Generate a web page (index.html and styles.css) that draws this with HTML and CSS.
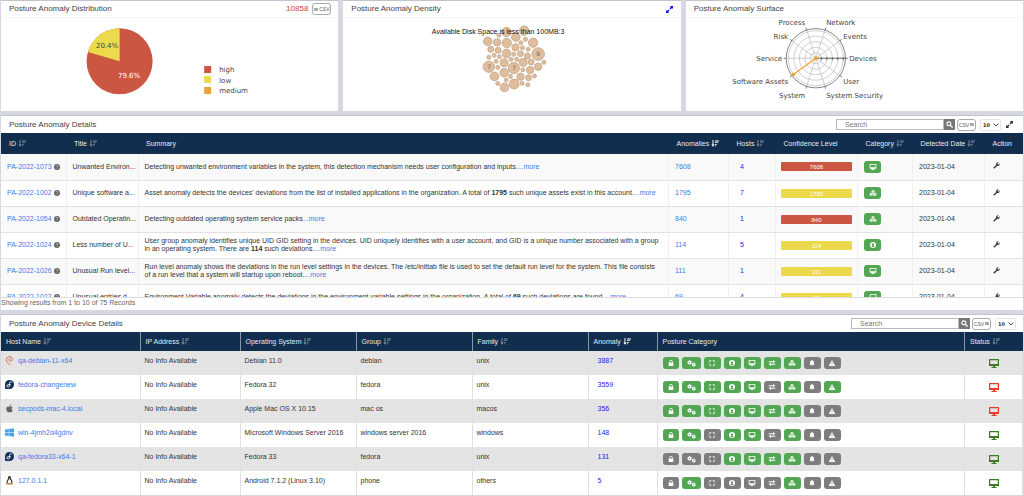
FILE: index.html
```html
<!DOCTYPE html>
<html lang="en">
<head>
<meta charset="utf-8">
<title>Posture Anomaly</title>
<link rel="stylesheet" href="styles.css">
</head>
<body>
<svg class="sprite" aria-hidden="true">
  <symbol id="sort" viewBox="0 0 16 14"><path d="M3 0h2v9h2.500L4 13.500.5 9H3zM8 1h8v2H8zM8 4.500h6v1.600H8zM8 8h4v1.600H8zM8 11h2v1.600H8z"/></symbol>
  <symbol id="help" viewBox="0 0 16 16"><circle cx="8" cy="8" r="8"/><path d="M5.500 6a2.500 2.500 0 1 1 3.500 2.300q-1 .5-1 1.500M8 11v2" fill="none" stroke="#ddd" stroke-width="1.500"/></symbol>
  <symbol id="search" viewBox="0 0 16 16"><circle cx="6.500" cy="6.500" r="4.500" fill="none" stroke="currentColor" stroke-width="2.500"/><path d="M10 10l5 5" stroke="currentColor" stroke-width="3"/></symbol>
  <symbol id="list" viewBox="0 0 10 10"><path d="M0 1h10v1.500H0zM0 4.200h10v1.500H0zM0 7.500h10V9H0z"/></symbol>
  <symbol id="chevron" viewBox="0 0 12 8"><path d="M1 1l5 5 5-5" fill="none" stroke="currentColor" stroke-width="1.800"/></symbol>
  <symbol id="expand" viewBox="0 0 16 16"><path d="M9 0h7v7l-2.200-2.200-3.300 3.300-2.600-2.600 3.300-3.300zM7 16H0V9l2.200 2.200 3.300-3.300 2.600 2.600-3.300 3.300z"/></symbol>
  <symbol id="wrench" viewBox="0 0 24 24"><path transform="translate(24) scale(-1 1)" d="M22.700 19l-9.100-9.100c.9-2.300.4-5-1.500-6.900-2-2-5-2.400-7.400-1.300L9 6 6 9 1.600 4.700C.4 7.100.9 10.100 2.900 12.100c1.900 1.900 4.600 2.400 6.900 1.500l9.100 9.100c.4.4 1 .4 1.400 0l2.300-2.300c.5-.4.5-1.100.1-1.400z"/></symbol>
  <symbol id="monitor" viewBox="0 0 20 18"><path fill-rule="evenodd" d="M1 0h18a1 1 0 0 1 1 1v12a1 1 0 0 1-1 1h-7v2h3v2H5v-2h3v-2H1a1 1 0 0 1-1-1V1a1 1 0 0 1 1-1zM2.500 2.500v7.500h15V2.500z"/></symbol>
  <symbol id="cubes" viewBox="0 0 20 18"><path d="M10 0l4.500 2v5L10 9 5.500 7V2zM4.800 8l4.500 2v5.500L4.800 18 0 15.500V10zM15.200 8L20 10v5.500L15.200 18l-4.500-2.500V10z"/><path d="M6 2.500l4 1.700 4-1.700M10 4.200V9M.5 10.500l4.300 1.800 4.300-1.800M4.800 12.300V18M11 10.500l4.200 1.800 4.300-1.800M15.200 12.300V18" fill="none" stroke="#53a653" stroke-width=".9"/></symbol>
  <symbol id="user" viewBox="0 0 18 18"><path fill-rule="evenodd" d="M9 0a9 9 0 1 1 0 18A9 9 0 0 1 9 0zm0 3.500a3.300 3.300 0 0 0-2 5.900v1.600l-3 1.800a6.500 6.500 0 0 0 10 0L11 11V9.400a3.300 3.300 0 0 0-2-5.900z"/></symbol>
  <symbol id="lock" viewBox="0 0 16 18"><path fill-rule="evenodd" d="M1 8h2V5a5 5 0 0 1 10 0v3h2v10H1zm4.500 0h5V5a2.500 2.500 0 0 0-5 0z"/></symbol>
  <symbol id="gears" viewBox="0 0 24 18"><circle cx="7" cy="6" r="3.400" fill="none" stroke="currentColor" stroke-width="3.400"/><circle cx="7" cy="6" r="5.200" fill="none" stroke="currentColor" stroke-width="2" stroke-dasharray="2.300 1.780"/><circle cx="18" cy="12" r="3" fill="none" stroke="currentColor" stroke-width="3"/><circle cx="18" cy="12" r="4.700" fill="none" stroke="currentColor" stroke-width="2" stroke-dasharray="1.900 1.800"/></symbol>
  <symbol id="frame" viewBox="0 0 18 18"><path d="M2 6V2h4M8 2h2M12 2h4v4M16 8v2M16 12v4h-4M10 16H8M6 16H2v-4M2 10V8" fill="none" stroke="currentColor" stroke-width="2.400"/></symbol>
  <symbol id="swap" viewBox="0 0 20 18"><path d="M0 4h13V0l7 5.200-7 4.300V6.500H0zM20 11.500H7V8.500L0 13l7 5v-4h13z"/></symbol>
  <symbol id="bell" viewBox="0 0 18 18"><path d="M8 0h2v1.500c3 .5 4.500 2.500 4.500 5.500 0 4 1 5.500 2.500 7H1c1.500-1.500 2.500-3 2.500-7 0-3 1.500-5 4.500-5.500zM6.500 15h5a2.500 2.500 0 0 1-5 0z"/></symbol>
  <symbol id="warn" viewBox="0 0 20 18"><path fill-rule="evenodd" d="M10 0l10 18H0zM8.700 6l.4 6h1.800l.4-6zM8.800 13.300v2.400h2.400v-2.400z"/></symbol>
  <symbol id="debian" viewBox="0 0 20 24"><path d="M12 23C5 20 1 15 2 9S8 0 13 2s6 8 3 11-8 1-7.500-3 4-4.500 5.500-3" fill="none" stroke="#d9534a" stroke-width="2.200"/></symbol>
  <symbol id="fedora" viewBox="0 0 24 24"><path fill="#132d5c" d="M12 0a12 12 0 1 1 0 24H2a2 2 0 0 1-2-2V12A12 12 0 0 1 12 0z"/><path d="M18 5.500c-3.500-1.500-6 .5-6 3.500v6.500c0 3-3.500 4.500-6 2.500-2-2-1-5.500 2-5.500h7.500" fill="none" stroke="#fff" stroke-width="2.400"/></symbol>
  <symbol id="apple" viewBox="0 0 384 512"><path fill="#666" d="M318.700 268.700c-.2-36.700 16.400-64.400 50-84.800-18.800-26.900-47.200-41.700-84.700-44.600-35.500-2.800-74.300 20.700-88.500 20.700-15 0-49.400-19.700-76.400-19.700C63.300 141.200 4 184.800 4 273.500q0 39.300 14.400 81.200c12.800 36.700 59 126.700 107.200 125.200 25.200-.6 43-17.900 75.800-17.900 31.800 0 48.300 17.900 76.400 17.900 48.600-.7 90.400-82.500 102.600-119.300-65.200-30.700-61.700-90-61.700-91.900zm-56.600-164.200c27.300-32.400 24.800-61.900 24-72.500-24.100 1.400-52 16.400-67.900 34.900-17.500 19.800-27.800 44.300-25.600 71.900 26.100 2 49.900-11.400 69.500-34.300z"/></symbol>
  <symbol id="windows" viewBox="0 0 24 24"><path fill="#4da3e6" d="M0 4l10-1.400V11.500H0zM11 2.400L24 .5v11H11zM0 12.500h10v9L0 20zM11 12.500h13v11l-13-1.900z"/></symbol>
  <symbol id="linux" viewBox="0 0 20 24"><path fill="#333" d="M10 0c3 0 4 2 4 5s5 7 4 14l-3 3H5l-3-3C1 13 6 9 6 5s1-5 4-5z"/><path fill="#fff" d="M10 8c2 0 5 6 4.500 10-.5 3-8 3-9 0C5 14 8 8 10 8z"/><path fill="#e8a32e" d="M7.500 5L10 4l2.500 1L10 7.500zM1 18l4-1 3 5-2 2-5-2zM19 18l-4-1-2 5 1 2 5-2z"/></symbol>
</svg>

<main class="page">
  <section class="charts">
    <article class="card">
      <header class="card-head"><h2>Posture Anomaly Distribution</h2><span class="total">10858</span><button class="csv"><svg><use href="#list"/></svg>CSV</button></header>
      <svg class="chart" viewBox="1 18 337 93" preserveAspectRatio="xMinYMin meet" role="img" aria-label="Severity pie chart">
        <circle cx="119.500" cy="61.300" r="33" fill="#cb5642"/>
        <path d="M119.500 61.300L87.900 51.900A33 33 0 0 1 119.500 28.300z" fill="#edd94c"/>
        <text x="107" y="48" class="mid">20.4%</text>
        <text x="129" y="78" class="mid light">79.6%</text>
        <path fill="#cb5642" d="M204 66h7v7h-7z"/><path fill="#edd94c" d="M204 76h7v7h-7z"/><path fill="#e8a33d" d="M204 87h7v7h-7z"/>
        <text x="219" y="72">high</text><text x="219" y="83">low</text><text x="219" y="93">medium</text>
      </svg>
    </article>
    <article class="card">
      <header class="card-head"><h2>Posture Anomaly Density</h2><button class="expand blue" aria-label="Expand"><svg><use href="#expand"/></svg></button></header>
      <svg class="chart" viewBox="343 18 337 93" preserveAspectRatio="xMinYMin meet" role="img" aria-label="Anomaly density bubbles">
        <g transform="translate(420 0) scale(.33333)" class="bubbles">
          <circle cx="259" cy="96" r="14"/><circle cx="312" cy="92" r="14"/><circle cx="287" cy="111" r="13"/><circle cx="236" cy="106" r="6"/><circle cx="203" cy="124" r="13"/><circle cx="231" cy="127" r="11"/><circle cx="260" cy="129" r="14"/><circle cx="302" cy="128" r="6"/><circle cx="316" cy="118" r="6"/><circle cx="339" cy="128" r="14"/><circle cx="212" cy="148" r="9"/><circle cx="234" cy="151" r="9"/><circle cx="259" cy="160" r="13"/><circle cx="286" cy="142" r="11"/><circle cx="307" cy="143" r="6"/><circle cx="324" cy="148" r="6"/><circle cx="354" cy="162" r="19"/><circle cx="281" cy="163" r="6"/><circle cx="301" cy="161" r="9"/><circle cx="322" cy="168" r="9"/><circle cx="206" cy="172" r="6"/><circle cx="222" cy="166" r="6"/><circle cx="238" cy="170" r="6"/><circle cx="228" cy="184" r="6"/><circle cx="252" cy="188" r="12"/><circle cx="273" cy="178" r="6"/><circle cx="290" cy="178" r="6"/><circle cx="309" cy="187" r="12"/><circle cx="333" cy="186" r="9"/><circle cx="371" cy="187" r="6"/><circle cx="206" cy="200" r="17"/><circle cx="233" cy="202" r="6"/><circle cx="281" cy="204" r="17"/><circle cx="308" cy="209" r="6"/><circle cx="330" cy="210" r="11"/><circle cx="354" cy="200" r="11"/><circle cx="252" cy="218" r="13"/><circle cx="223" cy="229" r="13"/><circle cx="271" cy="229" r="6"/><circle cx="258" cy="240" r="6"/><circle cx="301" cy="230" r="11"/><circle cx="325" cy="233" r="9"/><circle cx="343" cy="228" r="6"/><circle cx="233" cy="250" r="6"/><circle cx="282" cy="252" r="15"/><circle cx="306" cy="250" r="6"/><circle cx="323" cy="254" r="6"/><circle cx="253" cy="262" r="13"/>
        </g>
        <text x="538" y="56" class="mid small">9</text><text x="489" y="69" class="mid small">7</text><text x="514" y="70" class="mid small">7</text>
        <text x="498" y="34" class="tip mid">Available Disk Space is less than 100MB:3</text>
      </svg>
    </article>
    <article class="card">
      <header class="card-head"><h2>Posture Anomaly Surface</h2></header>
      <svg class="chart" viewBox="686 18 337 93" preserveAspectRatio="xMinYMin meet" role="img" aria-label="Anomaly surface radar chart">
        <g transform="translate(815.700 58.200)" fill="none">
          <g stroke="#bbb" stroke-width=".7"><circle r="27.500"/><circle r="22"/><circle r="16.500"/><circle r="11"/><circle r="5.500"/>
          <path d="M-30 0H30M24.300-17.600L-24.300 17.600M9.300-28.500L-9.300 28.500M-9.300-28.500L9.300 28.500M-24.300-17.600L24.300 17.600"/></g>
          <circle r="29.600" stroke="#666" stroke-width=".8"/>
          <path stroke="#555" stroke-width=".8" d="M0 0H32M5.500-1v3M11-1v3M16.500-1v3M22-1v3M27.500-1v3M-30 0h-2M24-17.400l2-1.400M9.200-28.200l.7-2.200M-9.200-28.200l-.7-2.200M-24-17.400l-2-1.400M24 17.400l2 1.400M9.200 28.200l.7 2.200M-9.200 28.200l-.7 2.200M-24 17.400l-2 1.400"/>
          <path d="M0 0L-22.500 16.300" stroke="#efa535" stroke-width="1.300"/><circle r="2" fill="#efa535"/><circle cx="-22.500" cy="16.300" r="1.800" fill="#efa535"/>
        </g>
        <text x="805" y="25" class="end">Process</text><text x="826" y="25">Network</text>
        <text x="788" y="39" class="end">Risk</text><text x="843" y="39">Events</text>
        <text x="782" y="61" class="end">Service</text><text x="849" y="61">Devices</text>
        <text x="788" y="84" class="end">Software Assets</text><text x="843" y="84">User</text>
        <text x="805" y="98" class="end">System</text><text x="826" y="98">System Security</text>
      </svg>
    </article>
  </section>

  <section class="panel">
    <header class="panel-head"><h2>Posture Anomaly Details</h2>
      <form class="search"><input type="text" placeholder="Search" aria-label="Search anomalies"><button type="button" aria-label="Search"><svg><use href="#search"/></svg></button></form>
      <button class="csv">CSV<svg><use href="#list"/></svg></button>
      <label class="count"><select aria-label="Rows per page"><option>10</option></select><svg><use href="#chevron"/></svg></label>
      <button class="expand" aria-label="Expand"><svg><use href="#expand"/></svg></button>
    </header>
    <div class="scroller">
    <table class="details">
      <colgroup><col class="w65"><col class="w72"><col><col class="w60"><col class="w47"><col class="w82"><col class="w55"><col class="w72"><col class="w38"></colgroup>
      <thead><tr><th>ID <svg class="sort"><use href="#sort"/></svg></th><th>Title <svg class="sort"><use href="#sort"/></svg></th><th>Summary</th><th>Anomalies <svg class="sort on"><use href="#sort"/></svg></th><th>Hosts <svg class="sort"><use href="#sort"/></svg></th><th>Confidence Level</th><th>Category <svg class="sort"><use href="#sort"/></svg></th><th>Detected Date <svg class="sort"><use href="#sort"/></svg></th><th>Action</th></tr></thead>
      <tbody>
        <tr><td><a href="#">PA-2022-1073</a><svg class="help"><use href="#help"/></svg></td><td>Unwanted Environ...</td><td>Detecting unwanted environment variables in the system, this detection mechanism needs user configuration and inputs.<a href="#">...more</a></td><td><a href="#">7608</a></td><td class="hosts"><a href="#">4</a></td><td><div class="bar high">7608</div></td><td><span class="badge"><svg><use href="#monitor"/></svg></span></td><td>2023-01-04</td><td class="act"><button aria-label="Fix"><svg><use href="#wrench"/></svg></button></td></tr>
        <tr><td><a href="#">PA-2022-1002</a><svg class="help"><use href="#help"/></svg></td><td>Unique software a...</td><td>Asset anomaly detects the devices' deviations from the list of installed applications in the organization. A total of <b>1795</b> such unique assets exist in this account.<a href="#">...more</a></td><td><a href="#">1795</a></td><td class="hosts"><a href="#">7</a></td><td><div class="bar">1795</div></td><td><span class="badge"><svg><use href="#cubes"/></svg></span></td><td>2023-01-04</td><td class="act"><button aria-label="Fix"><svg><use href="#wrench"/></svg></button></td></tr>
        <tr><td><a href="#">PA-2022-1054</a><svg class="help"><use href="#help"/></svg></td><td>Outdated Operatin...</td><td>Detecting outdated operating system service packs<a href="#">...more</a></td><td><a href="#">840</a></td><td class="hosts"><a href="#">1</a></td><td><div class="bar high">840</div></td><td><span class="badge"><svg><use href="#cubes"/></svg></span></td><td>2023-01-04</td><td class="act"><button aria-label="Fix"><svg><use href="#wrench"/></svg></button></td></tr>
        <tr><td><a href="#">PA-2022-1024</a><svg class="help"><use href="#help"/></svg></td><td>Less number of U...</td><td>User group anomaly identifies unique UID GID setting in the devices. UID uniquely identifies with a user account, and GID is a unique number associated with a group in an operating system. There are <b>114</b> such deviations.<a href="#">...more</a></td><td><a href="#">114</a></td><td class="hosts"><a href="#">5</a></td><td><div class="bar">114</div></td><td><span class="badge"><svg><use href="#user"/></svg></span></td><td>2023-01-04</td><td class="act"><button aria-label="Fix"><svg><use href="#wrench"/></svg></button></td></tr>
        <tr><td><a href="#">PA-2022-1026</a><svg class="help"><use href="#help"/></svg></td><td>Unusual Run level...</td><td>Run level anomaly shows the deviations in the run level settings in the devices. The /etc/inittab file is used to set the default run level for the system. This file consists of a run level that a system will startup upon reboot.<a href="#">...more</a></td><td><a href="#">111</a></td><td class="hosts"><a href="#">1</a></td><td><div class="bar">111</div></td><td><span class="badge"><svg><use href="#monitor"/></svg></span></td><td>2023-01-04</td><td class="act"><button aria-label="Fix"><svg><use href="#wrench"/></svg></button></td></tr>
        <tr><td><a href="#">PA-2022-1022</a><svg class="help"><use href="#help"/></svg></td><td>Unusual entries d...</td><td>Environment Variable anomaly detects the deviations in the environment variable settings in the organization. A total of <b>69</b> such deviations are found.<a href="#">...more</a></td><td><a href="#">69</a></td><td class="hosts"><a href="#">4</a></td><td><div class="bar">69</div></td><td><span class="badge"><svg><use href="#monitor"/></svg></span></td><td>2023-01-04</td><td class="act"><button aria-label="Fix"><svg><use href="#wrench"/></svg></button></td></tr>
      </tbody>
    </table>
    </div>
    <p class="results">Showing results from 1 to 10 of 75 Records</p>
  </section>

  <section class="panel">
    <header class="panel-head tall"><h2>Posture Anomaly Device Details</h2>
      <form class="search"><input type="text" placeholder="Search" aria-label="Search devices"><button type="button" aria-label="Search"><svg><use href="#search"/></svg></button></form>
      <button class="csv">CSV<svg><use href="#list"/></svg></button>
      <label class="count"><select aria-label="Devices per page"><option>10</option></select><svg><use href="#chevron"/></svg></label>
    </header>
    <table class="devices">
      <colgroup><col class="w139"><col class="w100"><col class="w116"><col class="w116"><col class="w116"><col class="w69"><col><col class="w58"></colgroup>
      <thead><tr><th>Host Name <svg class="sort"><use href="#sort"/></svg></th><th>IP Address <svg class="sort"><use href="#sort"/></svg></th><th>Operating System <svg class="sort"><use href="#sort"/></svg></th><th>Group <svg class="sort"><use href="#sort"/></svg></th><th>Family <svg class="sort"><use href="#sort"/></svg></th><th>Anomaly <svg class="sort on"><use href="#sort"/></svg></th><th>Posture Category</th><th>Status <svg class="sort"><use href="#sort"/></svg></th></tr></thead>
      <tbody>
        <tr><td><div class="host"><svg><use href="#debian"/></svg><a href="#">qa-debian-11-x64</a></div></td><td>No Info Available</td><td>Debian 11.0</td><td>debian</td><td>unix</td><td class="num"><a href="#">3887</a></td>
          <td class="cats"><div class="badges"><span class="badge slim"><svg><use href="#lock"/></svg></span><span class="badge wide"><svg><use href="#gears"/></svg></span><span class="badge"><svg><use href="#frame"/></svg></span><span class="badge"><svg><use href="#user"/></svg></span><span class="badge"><svg><use href="#monitor"/></svg></span><span class="badge"><svg><use href="#swap"/></svg></span><span class="badge"><svg><use href="#cubes"/></svg></span><span class="badge off"><svg><use href="#bell"/></svg></span><span class="badge off"><svg><use href="#warn"/></svg></span></div></td><td class="status"><svg><use href="#monitor"/></svg></td></tr>
        <tr><td><div class="host"><svg><use href="#fedora"/></svg><a href="#">fedora-changenew</a></div></td><td>No Info Available</td><td>Fedora 32</td><td>fedora</td><td>unix</td><td class="num"><a href="#">3559</a></td>
          <td class="cats"><div class="badges"><span class="badge slim"><svg><use href="#lock"/></svg></span><span class="badge wide"><svg><use href="#gears"/></svg></span><span class="badge"><svg><use href="#frame"/></svg></span><span class="badge"><svg><use href="#user"/></svg></span><span class="badge"><svg><use href="#monitor"/></svg></span><span class="badge off"><svg><use href="#swap"/></svg></span><span class="badge"><svg><use href="#cubes"/></svg></span><span class="badge off"><svg><use href="#bell"/></svg></span><span class="badge"><svg><use href="#warn"/></svg></span></div></td><td class="status down"><svg><use href="#monitor"/></svg></td></tr>
        <tr><td><div class="host"><svg><use href="#apple"/></svg><a href="#">secpods-mac-4.local</a></div></td><td>No Info Available</td><td>Apple Mac OS X 10.15</td><td>mac os</td><td>macos</td><td class="num"><a href="#">356</a></td>
          <td class="cats"><div class="badges"><span class="badge slim"><svg><use href="#lock"/></svg></span><span class="badge wide"><svg><use href="#gears"/></svg></span><span class="badge"><svg><use href="#frame"/></svg></span><span class="badge"><svg><use href="#user"/></svg></span><span class="badge"><svg><use href="#monitor"/></svg></span><span class="badge"><svg><use href="#swap"/></svg></span><span class="badge"><svg><use href="#cubes"/></svg></span><span class="badge off"><svg><use href="#bell"/></svg></span><span class="badge off"><svg><use href="#warn"/></svg></span></div></td><td class="status down"><svg><use href="#monitor"/></svg></td></tr>
        <tr><td><div class="host"><svg><use href="#windows"/></svg><a href="#">win-4jmh2d4gdnv</a></div></td><td>No Info Available</td><td>Microsoft Windows Server 2016</td><td>windows server 2016</td><td>windows</td><td class="num"><a href="#">148</a></td>
          <td class="cats"><div class="badges"><span class="badge slim"><svg><use href="#lock"/></svg></span><span class="badge wide"><svg><use href="#gears"/></svg></span><span class="badge off"><svg><use href="#frame"/></svg></span><span class="badge"><svg><use href="#user"/></svg></span><span class="badge"><svg><use href="#monitor"/></svg></span><span class="badge off"><svg><use href="#swap"/></svg></span><span class="badge"><svg><use href="#cubes"/></svg></span><span class="badge off"><svg><use href="#bell"/></svg></span><span class="badge off"><svg><use href="#warn"/></svg></span></div></td><td class="status"><svg><use href="#monitor"/></svg></td></tr>
        <tr><td><div class="host"><svg><use href="#fedora"/></svg><a href="#">qa-fedora33-x64-1</a></div></td><td>No Info Available</td><td>Fedora 33</td><td>fedora</td><td>unix</td><td class="num"><a href="#">131</a></td>
          <td class="cats"><div class="badges"><span class="badge slim off"><svg><use href="#lock"/></svg></span><span class="badge wide off"><svg><use href="#gears"/></svg></span><span class="badge off"><svg><use href="#frame"/></svg></span><span class="badge"><svg><use href="#user"/></svg></span><span class="badge"><svg><use href="#monitor"/></svg></span><span class="badge"><svg><use href="#swap"/></svg></span><span class="badge"><svg><use href="#cubes"/></svg></span><span class="badge off"><svg><use href="#bell"/></svg></span><span class="badge off"><svg><use href="#warn"/></svg></span></div></td><td class="status"><svg><use href="#monitor"/></svg></td></tr>
        <tr><td><div class="host"><svg><use href="#linux"/></svg><a href="#">127.0.1.1</a></div></td><td>No Info Available</td><td>Android 7.1.2 (Linux 3.10)</td><td>phone</td><td>others</td><td class="num"><a href="#">5</a></td>
          <td class="cats"><div class="badges"><span class="badge slim off"><svg><use href="#lock"/></svg></span><span class="badge wide"><svg><use href="#gears"/></svg></span><span class="badge off"><svg><use href="#frame"/></svg></span><span class="badge off"><svg><use href="#user"/></svg></span><span class="badge off"><svg><use href="#monitor"/></svg></span><span class="badge off"><svg><use href="#swap"/></svg></span><span class="badge"><svg><use href="#cubes"/></svg></span><span class="badge off"><svg><use href="#bell"/></svg></span><span class="badge off"><svg><use href="#warn"/></svg></span></div></td><td class="status"><svg><use href="#monitor"/></svg></td></tr>
      </tbody>
    </table>
  </section>
</main>
</body>
</html>
```

FILE: styles.css
```css
* { box-sizing: border-box; }
body { margin: 0; background: #d5d8e0; color: #333; font: 7px/8px "Liberation Sans", Arial, sans-serif; }
h2, p { margin: 0; font-weight: 400; }
h2 { font-size: 8px; line-height: 10px; color: #444; }
button { margin: 0; padding: 0; border: 0; background: none; font: inherit; color: inherit; }
svg { fill: currentColor; display: block; }
a { color: #3b7de9; text-decoration: none; }
.sprite { display: none; }
.page { display: flex; flex-direction: column; gap: 4px; padding: 0 1px 1px; }

.charts { display: grid; grid-template-columns: repeat(3, 1fr); gap: 5px; }
.card { background: #fff; border-top: 1px solid #c2c5cd; }
.card-head { display: flex; align-items: center; gap: 4px; height: 17px; padding: 0 7px 0 8px; border-bottom: 1px solid #f5f5f5; }
.card-head h2 { flex: 1; }
.total { color: #cb4335; font-size: 8px; }
.chart { width: 100%; height: auto; font: 7px "DejaVu Sans", sans-serif; fill: #444; }
.mid { text-anchor: middle; }
.end { text-anchor: end; }
.light { fill: #fff; }
.small { font-size: 6px; fill: #666; }
.tip { font-family: "Liberation Sans", sans-serif; fill: #111; }
.bubbles { fill: #dfbd9d; stroke: #b99c80; stroke-width: 2px; }

.csv { display: flex; align-items: center; justify-content: center; gap: 1px; width: 19px; height: 12px; border: 1px solid #aaa; border-radius: 3px; font-size: 5px; line-height: 6px; color: #555; background: #fff; }
.csv svg { width: 4px; height: 5px; }
.expand svg { width: 7px; height: 7px; }
.blue { color: #1414ee; }
.blue svg { margin-right: 1px; }

.panel { background: #fff; border-top: 1px solid #c2c5cd; }
.panel-head { display: flex; align-items: center; height: 17px; padding: 0 10px 0 8px; }
.panel-head h2 { flex: 1; }
.tall { padding-right: 7px; }
.search { display: flex; width: 119px; margin-right: 2px; }
.search input { flex: 1; min-width: 0; height: 11px; padding: 0 8px; border: 1px solid #bbb; border-radius: 0; background: #fff; font: inherit; }
.search input::placeholder { color: #777; }
.search button { display: grid; place-items: center; width: 11px; height: 11px; background: #777; color: #fff; }
.search button svg { width: 7px; height: 7px; }
.count { display: grid; align-items: center; width: 21px; height: 12px; margin-left: 4px; border: 1px solid #e5e5e5; border-radius: 2px; }
.count select, .count svg { grid-area: 1 / 1; }
.count select { appearance: none; width: 100%; margin: 0; padding: 0 0 0 2px; border: 0; background: none; font: bold 5px/8px "DejaVu Sans", sans-serif; color: #333; }
.count svg { justify-self: end; width: 6px; height: 4px; margin-right: 1px; pointer-events: none; }
.panel-head .expand { margin-left: 5px; }

table { width: 100%; table-layout: fixed; border-collapse: collapse; }
th { background: #112e4e; color: #e6eaee; font-weight: 400; text-align: left; white-space: nowrap; }
td, th { padding: 0 6px; }
.sort { display: inline-block; width: 8px; height: 7px; vertical-align: middle; color: #7b8b9c; }
.sort.on { color: #fff; }
.w38 { width: 38px; } .w47 { width: 47px; } .w55 { width: 55px; } .w58 { width: 58px; } .w60 { width: 60px; } .w65 { width: 65px; } .w69 { width: 69px; } .w72 { width: 72px; } .w82 { width: 82px; } .w100 { width: 100px; } .w116 { width: 116px; } .w139 { width: 139px; }

.scroller { max-height: 165px; overflow-y: auto; scrollbar-width: none; border-bottom: 1px solid #ddd; }
.details th { height: 21px; padding: 0 0 0 8px; }
.details td { height: 26px; border-bottom: 1px solid #e2e2e2; border-right: 1px solid #f0f0f0; }
.details tbody tr:nth-child(odd) { background: #f9f9f9; }
.details td:nth-child(-n+2) { padding: 0 0 0 6px; white-space: nowrap; }
.details .hosts { padding-left: 11px; }
.hosts a, .num a { color: #1c1ce8; }
.help { display: inline-block; width: 6px; height: 6px; margin-left: 2px; color: #666; vertical-align: middle; }
.bar { height: 9px; line-height: 10px; border-radius: 1px; background: #edd94c; color: #fff; font-size: 6px; text-align: center; }
.bar.high { background: #cb5642; }
.details td:nth-child(6) { padding: 0 5px; }
.act svg { width: 7px; height: 7px; }
.details .act { padding-left: 8px; color: #444; }
.results { padding: 1px 0 3px; color: #666; }

.badge { display: grid; place-items: center; width: 17px; height: 12px; border-radius: 3px; background: #53a653; color: #fff; }
.badge svg { width: 8px; height: 6px; }
.badge.slim { width: 16px; }
.badge.wide { width: 19px; }
.badge.wide svg { width: 9px; height: 7px; }
.badge.off { background: #7d7d7d; }
.badges { display: flex; gap: 3px; }

.devices th { height: 19px; padding: 0 5px; border-right: 1px solid #8896a5; }
.devices th:last-child { border-right: 0; }
.devices td { height: 24px; padding: 0 4px 5px; border-right: 1px solid #e0e0e0; }
.devices tbody tr:nth-child(odd) { background: #e4e4e4; }
.host { display: flex; align-items: center; gap: 4px; }
.host svg { width: 9px; height: 9px; }
.devices .num { padding-left: 9px; }
.devices .cats { padding: 0 5px; }
.devices .status { padding: 0 0 0 24px; color: #35831f; }
.devices .down { color: #f03a24; }
.status svg { width: 10px; height: 9px; }
```
